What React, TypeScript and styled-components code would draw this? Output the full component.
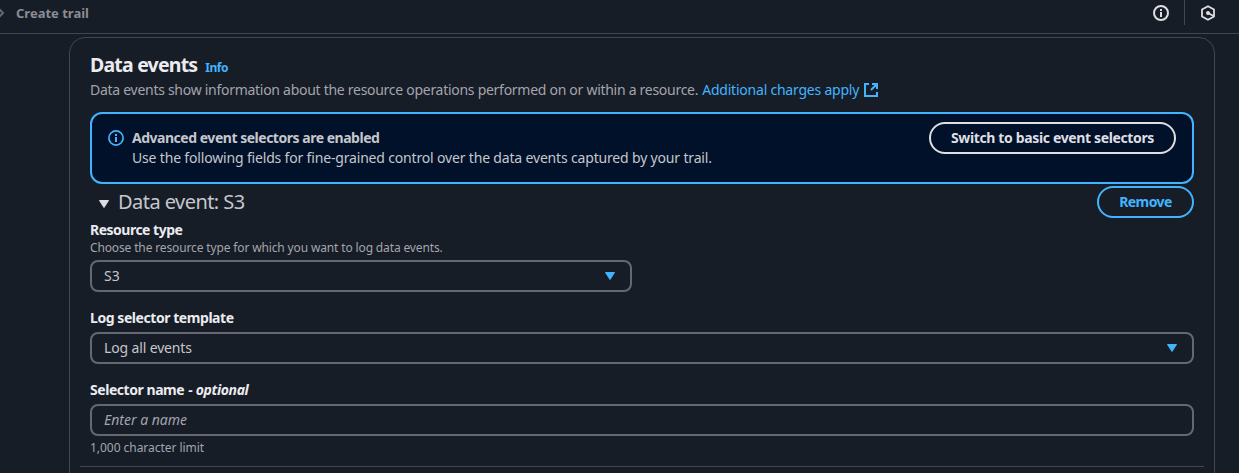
import React from 'react';
import styled, { createGlobalStyle } from 'styled-components';

const GlobalStyle = createGlobalStyle`
  * { box-sizing: border-box; }
  body {
    margin: 0;
    background: #161d26;
    color: #c6c6cd;
    font: 14px/20px "Noto Sans", "Open Sans", sans-serif;
    overflow: hidden;
  }
`;

const Page = styled.div`
  height: 473px;
  overflow: hidden;
`;

const TopBar = styled.header`
  height: 34px;
  display: flex;
  align-items: flex-start;
  justify-content: space-between;
  border-bottom: 1px solid #424650;
`;

const Breadcrumb = styled.nav`
  display: flex;
  align-items: center;
  gap: 10px;
  height: 26px;
  margin-left: -4px;
  color: #8c8c94;
`;

const Tools = styled.div`
  display: flex;
  align-items: center;
  height: 25px;
  padding-right: 23px;
  color: #dedee3;
`;

const ToolDivider = styled.span`
  width: 1px;
  height: 25px;
  margin: 0 15px;
  background: #424650;
`;

const Text = styled.span<{ $size?: number; $weight?: number; $color?: string; $track?: number; $italic?: boolean }>`
  font-size: ${p => p.$size ?? 14}px;
  font-weight: ${p => p.$weight ?? 400};
  font-style: ${p => (p.$italic ? 'italic' : 'normal')};
  color: ${p => p.$color ?? 'inherit'};
  letter-spacing: ${p => p.$track ?? 0}px;
  white-space: nowrap;
`;

const Panel = styled.main`
  width: 1146px;
  height: 500px;
  margin: 3px 0 0 69px;
  padding: 15px 20px 0;
  border: 1px solid #424650;
  border-radius: 16px;
`;

const Title = styled.h2`
  display: flex;
  align-items: baseline;
  gap: 8px;
  height: 27px;
  margin: 0;
  line-height: 24px;
`;

const Description = styled.div`
  display: flex;
  align-items: center;
  height: 20px;
  margin-bottom: 12px;
  color: #a4a4ad;
`;

const Link = styled.a`
  display: flex;
  align-items: center;
  gap: 5px;
  margin-left: 4px;
  color: #42b4ff;
`;

const Alert = styled.section`
  display: flex;
  align-items: flex-start;
  height: 72px;
  padding: 8px 16px;
  border: 2px solid #42b4ff;
  border-radius: 12px;
  background: #001129;
  svg { margin: 8px 8px 0 0; }
`;

const AlertText = styled.div`
  display: flex;
  flex-direction: column;
  flex: 1;
  padding-top: 6px;
`;

const Button = styled.button<{ $width: number; $color: string }>`
  width: ${p => p.$width}px;
  height: 32px;
  padding: 0;
  border: 2px solid ${p => p.$color};
  border-radius: 20px;
  background: transparent;
  color: ${p => p.$color};
  font: inherit;
`;

const EventHeader = styled.div`
  display: flex;
  align-items: center;
  height: 32px;
  margin: 2px 0;
  padding-left: 9px;
  svg { margin: 3px 9px 0 0; }
  button { margin-left: auto; }
`;

const Field = styled.div<{ $gap?: number }>`
  display: flex;
  flex-direction: column;
  margin-bottom: ${p => p.$gap ?? 16}px;
`;

const Label = styled.label`
  display: flex;
  gap: 4px;
  height: 20px;
  color: #ebebf0;
`;

const Hint = styled.div`
  height: 16px;
  margin-bottom: 4px;
  line-height: 14px;
  color: #a4a4ad;
`;

const Control = styled.div<{ $width?: number; $top?: number }>`
  display: flex;
  align-items: center;
  justify-content: space-between;
  width: ${p => (p.$width ? `${p.$width}px` : '100%')};
  height: 32px;
  margin-top: ${p => p.$top ?? 4}px;
  padding: 0 15px 0 12px;
  border: 2px solid #656871;
  border-radius: 8px;
`;

const Rule = styled.hr`
  height: 1px;
  margin: 10px -10px 0;
  border: 0;
  background: #424650;
`;

const InfoIcon = () => (
  <svg width="16" height="16" viewBox="0 0 16 16" fill="none" stroke="currentColor" strokeWidth="2">
    <circle cx="8" cy="8" r="7" />
    <path d="M8 12V7M8 6V4" />
  </svg>
);

const AlertIcon = () => (
  <svg width="16" height="16" viewBox="0 0 16 16" fill="none" stroke="#42b4ff" strokeWidth="1.7">
    <circle cx="8" cy="8" r="7.1" />
    <path d="M8 12V7M8 6V4" strokeWidth="2" />
  </svg>
);

const HexIcon = () => (
  <svg width="16" height="16" viewBox="0 0 16 16" fill="none" stroke="currentColor" strokeWidth="1.8">
    <path d="M14 11.5v-7L8 1.2 2 4.5v7l6 3.3z" />
    <path d="M8 8l5.6 3" />
    <circle cx="8" cy="8" r="2" fill="currentColor" stroke="none" />
  </svg>
);

const ExternalIcon = () => (
  <svg width="14" height="14" viewBox="0 0 14 14" fill="none" stroke="currentColor" strokeWidth="2">
    <path d="M5 1H1v12h12V9M8 1h5v5M13 1L7 7" />
  </svg>
);

const Caret = ({ color = '#42b4ff' }: { color?: string }) => (
  <svg width="10" height="8" viewBox="0 0 10 8">
    <path d="M.5.5h9L5 7.5z" fill={color} stroke={color} strokeLinejoin="round" />
  </svg>
);

export default function App() {
  return (
    <Page>
      <GlobalStyle />
      <TopBar>
        <Breadcrumb>
          <svg width="10" height="10" viewBox="0 0 10 10" fill="none" stroke="#656871" strokeWidth="2">
            <path d="M3 1l4 4-4 4" />
          </svg>
          <Text $size={13} $weight={700}>Create trail</Text>
        </Breadcrumb>
        <Tools>
          <InfoIcon />
          <ToolDivider />
          <HexIcon />
        </Tools>
      </TopBar>
      <Panel>
        <Title>
          <Text $size={19.5} $weight={700} $color="#ebebf0" $track={-0.8}>Data events</Text>
          <Text $size={12} $weight={700} $color="#42b4ff" $track={-0.5}>Info</Text>
        </Title>
        <Description>
          <Text $track={-0.28}>Data events show information about the resource operations performed on or within a resource.</Text>
          <Link><Text $track={-0.22}>Additional charges apply</Text><ExternalIcon /></Link>
        </Description>
        <Alert>
          <AlertIcon />
          <AlertText>
            <Text $weight={700} $track={-0.48}>Advanced event selectors are enabled</Text>
            <Text $track={-0.17}>Use the following fields for fine-grained control over the data events captured by your trail.</Text>
          </AlertText>
          <Button $width={247} $color="#dedee3"><Text $weight={700} $track={-0.36}>Switch to basic event selectors</Text></Button>
        </Alert>
        <EventHeader>
          <Caret color="#dedee3" />
          <Text $size={20} $track={-0.55}>Data event: S3</Text>
          <Button $width={97} $color="#42b4ff"><Text $weight={700} $track={-0.6}>Remove</Text></Button>
        </EventHeader>
        <Field>
          <Label><Text $weight={700} $track={-0.5}>Resource type</Text></Label>
          <Hint><Text $size={12} $track={-0.14}>Choose the resource type for which you want to log data events.</Text></Hint>
          <Control $width={542} $top={0}><Text>S3</Text><Caret /></Control>
        </Field>
        <Field>
          <Label><Text $weight={700} $track={-0.44}>Log selector template</Text></Label>
          <Control><Text $track={-0.14}>Log all events</Text><Caret /></Control>
        </Field>
        <Field $gap={4}>
          <Label>
            <Text $weight={700} $track={-0.45}>Selector name</Text>
            <Text $weight={700} $italic $track={-0.35}>- optional</Text>
          </Label>
          <Control><Text $italic $color="#a4a4ad">Enter a name</Text></Control>
        </Field>
        <Hint><Text $size={12} $track={-0.04}>1,000 character limit</Text></Hint>
        <Rule />
      </Panel>
    </Page>
  );
}
